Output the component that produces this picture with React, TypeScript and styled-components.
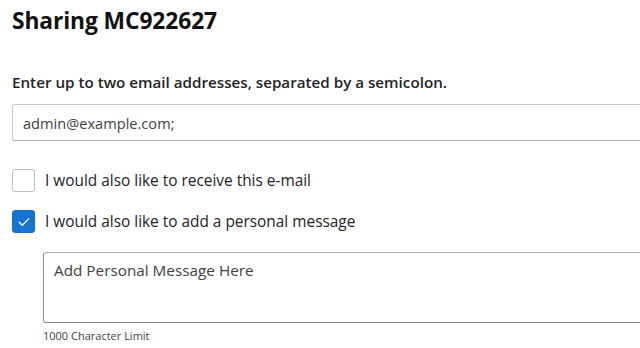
import styled, { createGlobalStyle } from "styled-components";

const GlobalStyle = createGlobalStyle`
  html, body {
    margin: 0;
    padding: 0;
    background: #ffffff;
    overflow: hidden;
  }
  body {
    font-family: "Open Sans", "Noto Sans", sans-serif;
    color: #242424;
  }
`;

const Page = styled.div`
  width: 700px;
  padding: 7px 0 0 12px;
  box-sizing: border-box;
`;

const Title = styled.h1`
  margin: 0;
  font-size: 22.8px;
  line-height: 28px;
  font-weight: 700;
  color: #111111;
  letter-spacing: -0.1px;
`;

const Label = styled.div`
  margin-top: 37px;
  font-size: 15.2px;
  line-height: 20px;
  font-weight: 600;
  color: #242424;
`;

const EmailInput = styled.input`
  display: block;
  width: 100%;
  height: 37px;
  margin-top: 12px;
  padding: 0 10px;
  box-sizing: border-box;
  border: 1px solid #c8c8c8;
  border-bottom-color: #b0b0b0;
  border-radius: 3px;
  font-family: inherit;
  font-size: 14.6px;
  color: #424242;
  outline: none;
`;

const Options = styled.div`
  display: flex;
  flex-direction: column;
  gap: 18px;
  margin-top: 28px;
`;

const OptionRow = styled.label`
  display: flex;
  align-items: center;
  gap: 10px;
  font-size: 15.4px;
  line-height: 23px;
  color: #242424;
`;

const Box = styled.span<{ $checked?: boolean }>`
  display: flex;
  align-items: center;
  justify-content: center;
  width: 23px;
  height: 23px;
  box-sizing: border-box;
  border-radius: 3px;
  border: 1px solid ${(p) => (p.$checked ? "#1474d0" : "#bdbdbd")};
  background: ${(p) => (p.$checked ? "#1474d0" : "#ffffff")};
  flex-shrink: 0;
`;

const MessageBlock = styled.div`
  margin: 19px 0 0 31px;
`;

const MessageArea = styled.textarea`
  display: block;
  width: 100%;
  height: 71px;
  padding: 6px 10px 5px;
  box-sizing: border-box;
  border: 1px solid #8a8a8a;
  border-top-color: #a8a8a8;
  border-radius: 3px;
  font-family: inherit;
  font-size: 15.3px;
  line-height: 22px;
  color: #424242;
  resize: none;
  outline: none;
  &::placeholder {
    color: #424242;
  }
`;

const Limit = styled.div`
  margin-top: 6px;
  font-size: 11px;
  line-height: 14px;
  color: #424242;
`;

function CheckMark() {
  return (
    <svg width="12" height="10" viewBox="0 0 12 10" fill="none">
      <path
        d="M1.2 5.2 L4.3 8.2 L10.8 1.6"
        stroke="#ffffff"
        strokeWidth="1.3"
        strokeLinecap="round"
        strokeLinejoin="round"
      />
    </svg>
  );
}

export default function App() {
  return (
    <Page>
      <GlobalStyle />
      <Title>Sharing MC922627</Title>
      <Label>Enter up to two email addresses, separated by a semicolon.</Label>
      <EmailInput defaultValue="admin@example.com;" />
      <Options>
        <OptionRow>
          <Box />
          I would also like to receive this e-mail
        </OptionRow>
        <OptionRow>
          <Box $checked>
            <CheckMark />
          </Box>
          I would also like to add a personal message
        </OptionRow>
      </Options>
      <MessageBlock>
        <MessageArea placeholder="Add Personal Message Here" />
        <Limit>1000 Character Limit</Limit>
      </MessageBlock>
    </Page>
  );
}
